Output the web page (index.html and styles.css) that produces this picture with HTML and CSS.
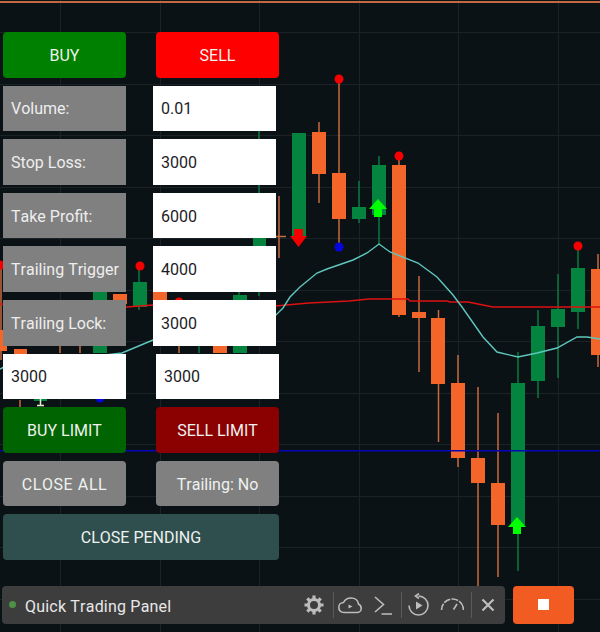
FILE: index.html
```html
<!DOCTYPE html>
<html>
<head>
    <title>Quick Trading Panel</title>
    <link rel="stylesheet" href="styles.css">
</head>
<body>
    <svg class="chart" width="600" height="632" viewBox="0 0 600 632">
        <path class="grid" d="M60.5 0V632M160.5 0V632M259.5 0V632M359.5 0V632M458.5 0V632M558.5 0V632M0 32.5H600M0 84.5H600M0 135.5H600M0 187.5H600M0 238.5H600M0 290.5H600M0 341.5H600M0 393.5H600M0 444.5H600M0 496.5H600M0 547.5H600M0 599.5H600"/>
        <rect class="top-line" x="0" y="1" width="600" height="2"/>

        <!-- falling candles -->
        <path class="wick-down" d="M1 262V360M20 400V408M60 346V353M80 346V353M120 294V310M179 346V353M279 196V258M276 236.500H286M319 122V203M339 79V248M399 156V317M419 276V372M438.500 310V442M458 355V467M478 387V586M498 413V577M598 254V367"/>
        <rect class="down" x="-6" y="330" width="13" height="21"/>
        <rect class="down" x="14" y="349" width="13" height="10"/>
        <rect class="down" x="113" y="294" width="14" height="10"/>
        <rect class="down" x="153" y="292" width="14" height="10"/>
        <rect class="down" x="213" y="340" width="14" height="13"/>
        <rect class="down" x="312" y="132" width="14" height="42"/>
        <rect class="down" x="332" y="173" width="14" height="46"/>
        <rect class="down" x="392" y="165" width="14" height="150"/>
        <rect class="down" x="412" y="312" width="14" height="6"/>
        <rect class="down" x="431" y="318" width="14" height="66"/>
        <rect class="down" x="451" y="383" width="14" height="75"/>
        <rect class="down" x="471" y="458" width="14" height="25"/>
        <rect class="down" x="491" y="483" width="14" height="42"/>
        <rect class="down" x="591" y="269" width="14" height="86"/>

        <!-- rising candles -->
        <path class="wick-up" d="M139 270V310M199 346V353M239 290V300M259 130V250M259 292V296M359 181V223M379 156V244M518 352V571M538 310V398M558 274V378M578 250V329"/>
        <rect class="up" x="34" y="396" width="13" height="5"/>
        <rect class="up" x="93" y="280" width="14" height="20"/>
        <rect class="up" x="93" y="340" width="14" height="13"/>
        <rect class="up" x="133" y="282" width="14" height="25"/>
        <rect class="up" x="233" y="295" width="14" height="8"/>
        <rect class="up" x="233" y="340" width="14" height="13"/>
        <rect class="up" x="253" y="225" width="13" height="21"/>
        <rect class="up" x="292" y="133" width="14" height="104"/>
        <rect class="up" x="352" y="207" width="14" height="12"/>
        <rect class="up" x="372" y="165" width="14" height="50"/>
        <rect class="up" x="511" y="383" width="14" height="142"/>
        <rect class="up" x="531" y="326" width="14" height="55"/>
        <rect class="up" x="551" y="309" width="14" height="18"/>
        <rect class="up" x="571" y="268" width="14" height="44"/>
        <path class="tee" d="M37 405.500H44M40.500 399V405"/>

        <!-- moving averages -->
        <polyline class="ma-slow" points="0,304 127,307 153,305 275,306 309,303 349,301 369,299 408,299 410,301 447,301 450,302 468,302 483,305 493,307 600,307"/>
        <polyline class="ma-fast" points="0,369 4,367 122,353 153,340 250,325 276,315 283,308 290,297 300,287 317,273 327,269 353,260 367,253 379,244 390,252 418,263 437,277 453,295 462,307 483,337 497,352 518,357 537,353 557,348 577,337 587,337 600,339"/>
        <rect class="order-line" x="0" y="450" width="600" height="1.500"/>

        <!-- signals -->
        <circle class="dot-red" cx="0" cy="265" r="4.500"/>
        <circle class="dot-red" cx="140" cy="266" r="4.500"/>
        <circle class="dot-red" cx="179" cy="302" r="4.500"/>
        <circle class="dot-red" cx="339" cy="79" r="4.500"/>
        <circle class="dot-red" cx="399" cy="156" r="4.500"/>
        <circle class="dot-red" cx="578" cy="246" r="4.500"/>
        <circle class="dot-blue" cx="339" cy="247" r="4.500"/>
        <circle class="dot-blue" cx="100" cy="398" r="4.500"/>
        <polygon class="arrow-down" points="294,229 303,229 303,236 307,236 298.500,247 290,236 294,236"/>
        <polygon class="arrow-up" points="378,199 387,209 382,209 382,217 374,217 374,209 369,209"/>
        <polygon class="arrow-up" points="517,517 526,527 521,527 521,534 513,534 513,527 508,527"/>
    </svg>

    <div class="panel">
        <button class="btn buy">BUY</button>
        <button class="btn sell">SELL</button>

        <div class="label">Volume:</div>
        <input class="field field-shift" type="text" value="0.01">
        <div class="label">Stop Loss:</div>
        <input class="field field-shift" type="text" value="3000">
        <div class="label">Take Profit:</div>
        <input class="field field-shift" type="text" value="6000">
        <div class="label">Trailing Trigger</div>
        <input class="field field-shift" type="text" value="4000">
        <div class="label">Trailing Lock:</div>
        <input class="field field-shift" type="text" value="3000">

        <input class="field" type="text" value="3000">
        <input class="field" type="text" value="3000">

        <button class="btn buy-limit">BUY LIMIT</button>
        <button class="btn sell-limit">SELL LIMIT</button>
        <button class="btn grey close-all">CLOSE ALL</button>
        <button class="btn grey">Trailing: No</button>
        <button class="btn pending">CLOSE PENDING</button>
    </div>

    <div class="footer">
        <div class="toolbar">
            <span class="status"></span>
            <span class="title">Quick Trading Panel</span>
            <svg class="tool tool-first" viewBox="0 0 24 24">
                <circle cx="12" cy="12" r="5.500" stroke-width="3"/>
                <path stroke-width="3.200" d="M12 2.500V6M12 18V21.500M2.500 12H6M18 12H21.500M5.300 5.300L7.800 7.800M16.200 16.200L18.700 18.700M5.300 18.700L7.800 16.200M16.200 7.800L18.700 5.300"/>
            </svg>
            <span class="sep"></span>
            <svg class="tool" viewBox="0 0 24 24">
                <path d="M6 19.500C2.500 19.500 0.800 17 0.800 14.500C0.800 11.500 3 9.500 5.500 9.500C7 6.500 10 5 13 5C17 5 20 7.500 20.500 11C22.500 12 23.200 14 23.200 15.500C23.200 18 21 19.500 19 19.500Z"/>
                <path class="solid" d="M10.500 11.500L14.500 13.500L10.500 15.500Z"/>
            </svg>
            <svg class="tool tool-next" viewBox="0 0 24 24">
                <path d="M5 4L13.500 11.500L5 19M11.500 21H22"/>
            </svg>
            <span class="sep"></span>
            <svg class="tool" viewBox="0 0 24 24">
                <path d="M12.500 3A9.500 9.500 0 1 1 3 12.500M13 0.500L9.500 3L13 5.500"/>
                <path class="solid" d="M10 8.500L16.500 12.500L10 16.500Z"/>
            </svg>
            <svg class="tool tool-speed" viewBox="0 0 24 24">
                <path d="M1.500 17A11 11 0 0 1 3.500 10.700M4.300 9.600A11 11 0 0 1 10.200 6.200M11.500 6A11 11 0 0 1 18 7.500M19.100 8.200A11 11 0 0 1 23.500 17"/>
                <path d="M13.500 16.500L17 11"/>
            </svg>
            <span class="sep"></span>
            <svg class="tool tool-close" viewBox="0 0 24 24">
                <path d="M6.500 6.500L17.500 17.500M17.500 6.500L6.500 17.500"/>
            </svg>
        </div>
        <div class="stop"><span class="stop-square"></span></div>
    </div>
</body>
</html>
```

FILE: styles.css
```css
* {
    margin: 0px;
    padding: 0px;
    box-sizing: border-box;
}
html {
    background: #0b1216;
}
body {
    height: 632px;
    overflow: hidden;
    font-family: Roboto, sans-serif;
    font-size: 16px;
    font-kerning: none;
}
.chart {
    position: absolute;
    top: 0;
    left: 0;
    z-index: -1;
}
.chart .grid {
    stroke: #1c2327;
    stroke-width: 1;
    fill: none;
}
.chart .top-line {
    fill: #c46a42;
}
.chart .down {
    fill: #f4652a;
}
.chart .up {
    fill: #05843f;
}
.chart .wick-down {
    stroke: #c8693f;
    stroke-width: 1.5;
    fill: none;
}
.chart .wick-up {
    stroke: #0a7a40;
    stroke-width: 1.5;
    fill: none;
}
.chart .tee {
    stroke: #e6eecb;
    stroke-width: 1.5;
    fill: none;
}
.chart .ma-slow {
    stroke: #dd1111;
    stroke-width: 1.5;
    fill: none;
}
.chart .ma-fast {
    stroke: #5fc7bd;
    stroke-width: 1.4;
    fill: none;
}
.chart .order-line {
    fill: #0505b8;
}
.chart .dot-red {
    fill: #f40000;
}
.chart .dot-blue {
    fill: #0505dd;
}
.chart .arrow-down {
    fill: #f40000;
}
.chart .arrow-up {
    fill: #00ff00;
}
.panel {
    display: grid;
    grid-template-columns: 123px 123px;
    grid-auto-rows: 45.6px;
    column-gap: 30px;
    row-gap: 8px;
    padding: 32px 0 0 3px;
}
.btn {
    padding-top: 1px;
    border: none;
    border-radius: 4px;
    font-family: Roboto, sans-serif;
    font-size: 16px;
    font-kerning: none;
    color: #eef2ee;
}
.buy {
    background: #008000;
}
.sell {
    background: #ff0000;
}
.buy-limit {
    background: #006400;
}
.sell-limit {
    background: #8b0000;
}
.grey {
    background: #808080;
}
.close-all {
    letter-spacing: 0.6px;
}
.pending {
    grid-column: span 2;
    background: #2f4f4f;
}
.label {
    display: flex;
    align-items: center;
    padding: 1px 0 0 8px;
    background: #808080;
    color: #eeeeee;
    white-space: nowrap;
}
.field {
    width: 123px;
    padding: 1px 0 0 8px;
    border: none;
    background: #ffffff;
    color: #1c1c24;
    font-family: Roboto, sans-serif;
    font-size: 16px;
}
.field-shift {
    margin-left: -3px;
}
.footer {
    display: flex;
    gap: 8px;
    margin-top: 26px;
    padding-left: 2px;
}
.toolbar {
    display: flex;
    align-items: center;
    width: 503px;
    height: 38px;
    padding-right: 5px;
    background: #3d3d3d;
    border-radius: 4px;
}
.status {
    width: 7px;
    height: 7px;
    margin-left: 7px;
    border-radius: 50%;
    background: #4d9146;
}
.title {
    margin-left: 9px;
    padding-top: 3px;
    color: #e8e8e8;
    letter-spacing: 0.2px;
}
.tool {
    width: 24px;
    height: 24px;
    stroke: #bdbdbd;
    stroke-width: 1.6;
    fill: none;
}
.tool .solid {
    fill: #bdbdbd;
    stroke: none;
}
.tool-first {
    margin-left: auto;
}
.tool-next {
    margin-left: 8px;
}
.tool-speed {
    margin-left: 10px;
}
.tool-close {
    stroke-width: 2.2;
}
.sep {
    width: 1px;
    height: 26px;
    margin: 0 4px 0 7px;
    background: #5a5a5a;
}
.stop {
    display: flex;
    align-items: center;
    justify-content: center;
    width: 61px;
    height: 38px;
    background: #f25c22;
    border-radius: 4px;
}
.stop-square {
    width: 11px;
    height: 11px;
    background: #ffffff;
}
```
